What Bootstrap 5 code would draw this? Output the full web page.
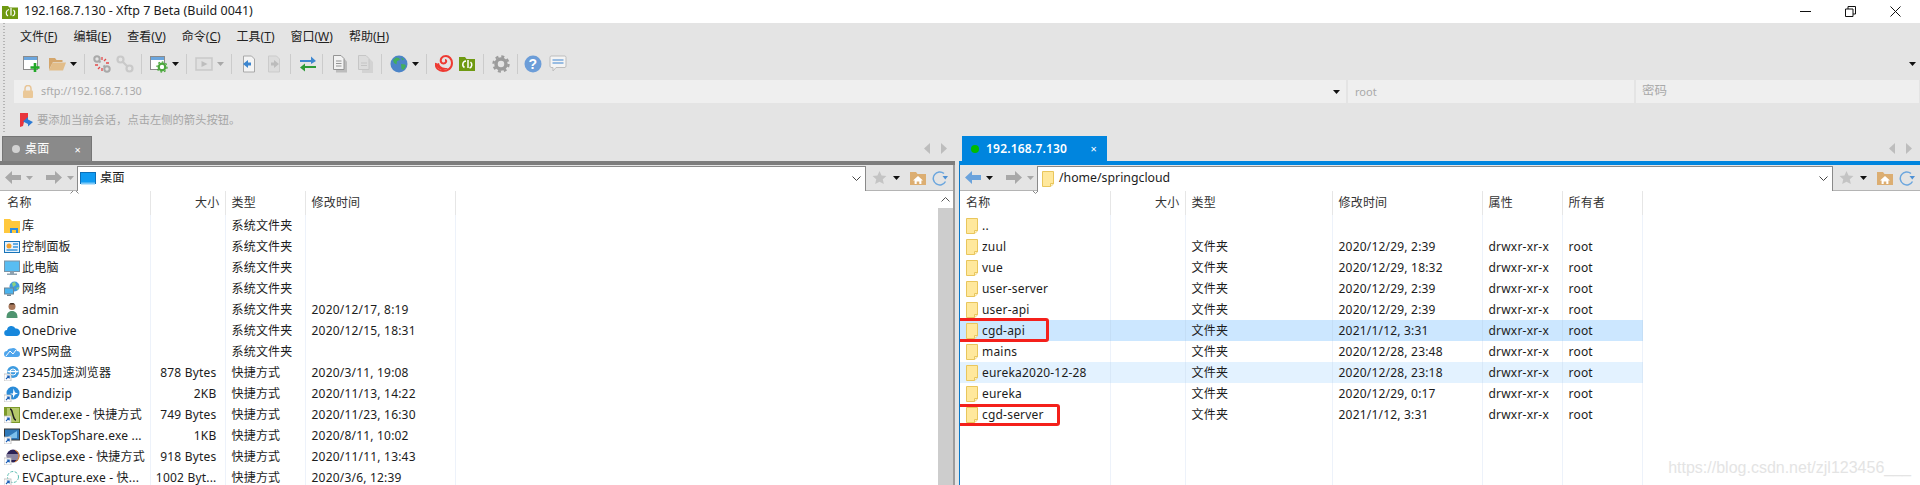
<!DOCTYPE html>
<html lang="zh-CN">
<head>
  <meta charset="UTF-8">
  <title>192.168.7.130 - Xftp 7 Beta (Build 0041)</title>
  <meta name="viewport" content="width=device-width, initial-scale=1.0">
  <link href="https://cdn.jsdelivr.net/npm/bootstrap@5.3.3/dist/css/bootstrap.min.css" rel="stylesheet">
  <style>
    html, body { height: 485px; overflow: hidden; }
    body { font-family: "Noto Sans", "Noto Sans CJK SC", sans-serif; font-size: 12px; line-height: 1; color: #1c1c1c; background: #fff; letter-spacing: .2px; }
    svg { display: block; flex: none; }
    .titlebar { height: 23px; padding-left: 2px; font-size: 12.5px; letter-spacing: 0; }
    .titlebar .app-title { margin-left: 6px; }
    .winbtns { gap: 34px; padding-right: 19px; }
    .chrome { background: #e4e4e4; height: 113px; }
    .grip { width: 14px; padding-left: 3px; }
    .grip i { display: block; height: 111px; width: 2px; background: repeating-linear-gradient(#b5b5b5 0 1px, transparent 1px 3px); }
    .menubar { height: 24px; padding: 8px 0 0 6px; gap: 16px; color: #222; letter-spacing: 0; }
    .tbar { height: 33px; padding-left: 9px; gap: 7px; }
    .tb-sep { width: 1px; height: 20px; background: #cbcbcb; margin-right: 1px; }
    .tb-caret { margin-left: -3px; }
    .tb-tight { margin-left: -2px; }
    .addr { height: 23px; gap: 2px; color: #a9a9a9; font-size: 10.8px; letter-spacing: 0; }
    .addr > div { background: #efefef; height: 23px; }
    .addr-main { width: 1332px; padding: 0 6px 0 9px; }
    .addr-user { width: 286px; padding-left: 7px; font-size: 11px; }
    .addr-pass { width: 283px; padding-left: 6px; font-size: 12.5px; }
    .hint { height: 33px; padding-left: 6px; color: #a6a6a6; font-size: 11.3px; letter-spacing: 0; }
    .panes { gap: 4px; height: 349px; background: #e4e4e4; }
    .pane-l { width: 955px; }
    .pane-r { width: 961px; }
    .tabstrip { height: 25px; background: #e4e4e4; }
    .ftab { height: 25px; color: #fff; font-weight: 600; }
    .ftab-l { width: 90px; margin-left: 2px; padding: 0 10px 0 9px; background: #8a8a8a; border: 1px solid #757575; border-bottom: 0; font-weight: 400; }
    .ftab-r { width: 145px; margin-left: 3px; padding: 0 10px 0 9px; background: #0085de; }
    .dot { width: 8px; height: 8px; border-radius: 50%; margin-right: 5px; }
    .dot-off { background: #d2d2d2; }
    .dot-on { background: #00bb00; margin-right: 7px; }
    .tab-x { margin-left: auto; font-size: 11px; font-weight: 400; }
    .scrolls { gap: 11px; padding-right: 8px; margin-left: auto; }
    .bar-l { height: 4px; background: #7d7d7d; }
    .bar-r { height: 4px; background: #0085de; }
    .body-r { border-left: 1px solid #0a78c8; height: 320px; background: #fff; }
    .body-l { height: 320px; background: #fff; border-right: 2px solid #9c9c9c; }
    .navrow { height: 26px; background: #e4e4e4; border-bottom: 1px solid #b4b4b4; padding-left: 5px; }
    .pathbox { height: 25px; background: #fff; border-top: 1px solid #8a8a8a; border-left: 1px solid #8a8a8a; border-right: 1px solid #8a8a8a; margin-top: 1px; padding: 0 4px 0 2px; font-size: 12.3px; letter-spacing: 0; }
    .path-folder { margin: 0 1px 0 2px; }
    .navbtns { width: 72px; gap: 5px; }
    .navtools { width: 87px; padding-left: 6px; gap: 6px; }
    .listwrap { height: 294px; overflow: hidden; position: relative; }
    .ftable { table-layout: fixed; border-collapse: collapse; }
    .ftable td, .ftable th { height: 21px; padding: 0 0 0 6px; border-right: 1px solid #edf2fa; white-space: nowrap; overflow: hidden; font-weight: 400; vertical-align: middle; }
    .ftable th { height: 24px; border-right-color: #e6e6e6; color: #333; }
    .ftable td.cell-name, .ftable th.cell-name { overflow: visible; position: relative; }
    .ftable .cell-size { padding: 0 8px 0 0; text-align: right; overflow: hidden; }
    .ftable th.cell-size { padding-right: 5px; }
    .ftable .row-sel td { background: #cce7ff; border-right-color: #c4def6; }
    .ftable .row-alt td { background: #e3f2ff; border-right-color: #d8e8f8; }
    .sel-l .cell-name { padding-left: 4px; }
    .name-in { gap: 2px; }
    .name-r { gap: 0; }
    .sort-mark { position: absolute; top: -2px; font-size: 0; }
    .sort-l { left: 70px; }
    .sort-r { left: 71px; }
    .redbox { position: absolute; border: 3px solid #f4201b; border-radius: 3px; }
    .redbox-api { left: -3px; top: -2px; width: 92px; height: 24px; }
    .redbox-srv { left: -3px; top: 0; width: 103px; height: 22px; }
    .sbar { width: 15px; background: #f1f1f1; }
    .sbar-up { height: 17px; background: #fff; }
    .sbar-thumb { background: #cdcdcd; }
    .wmark { position: absolute; right: 9px; bottom: 9px; font-family: "Liberation Sans", sans-serif; font-size: 16px; letter-spacing: 0; color: #e4e4e4; }
  </style>
</head>
<body>
  <svg width="0" height="0" class="position-absolute">
    <symbol id="caret" viewBox="0 0 7 4"><path d="M0 0h7L3.5 4z" fill="#111"/></symbol>
    <symbol id="caretg" viewBox="0 0 7 4"><path d="M0 0h7L3.5 4z" fill="#a8a8a8"/></symbol>
    <symbol id="folder" viewBox="0 0 16 16"><path d="M.5.5h11v12.5l-3 2.5H.5z" fill="#ffe89c" stroke="#e9c65c"/><path d="M8.5 15.5v-3h3" fill="#fff3c8" stroke="#e9c65c"/></symbol>
    <symbol id="sc" viewBox="0 0 16 16"><rect x="0" y="9" width="7" height="7" fill="#fff" stroke="#b8b8b8" stroke-width=".8"/><path d="M2 14l2.6-2.6M2.8 11h2.4v2.4" fill="none" stroke="#1c5fb5" stroke-width="1.1"/></symbol>
    <symbol id="arrowl" viewBox="0 0 16 13"><path d="M7 0v4h9v5H7v4L0 6.500z"/></symbol>
    <symbol id="arrowr" viewBox="0 0 16 13"><path d="M9 0v4H0v5h9v4l7-6.500z"/></symbol>
    <symbol id="star" viewBox="0 0 16 16"><path d="M8 1l2.200 4.800 5.200.6-3.900 3.500 1.100 5.100L8 12.400 3.400 15l1.100-5.100L.6 6.400l5.200-.6z" fill="#c4c4c4"/></symbol>
    <symbol id="home" viewBox="0 0 16 16"><path d="M0 2h6l1.500 2H16v11H0z" fill="#dcae72"/><path d="M8 6l5 4.500h-1.600V14H9.300v-2.500H6.700V14H4.600v-3.500H3z" fill="#fff"/></symbol>
    <symbol id="refresh" viewBox="0 0 16 16"><path d="M13.500 11.500A6.500 6.500 0 1 1 12 3.500" fill="none" stroke="#6ba6de" stroke-width="1.500"/><path d="M10.500 6h5.500l-2.700 3.500z" fill="#4d90d4"/></symbol>
    <symbol id="chev" viewBox="0 0 9 5"><path d="M.5.500l4 4 4-4" fill="none" stroke="#444"/></symbol>
  </svg>

  <div class="titlebar d-flex align-items-center">
    <svg width="16" height="14" viewBox="0 0 16 14"><path d="M0 1h6l1.500 1.500H16V14H0z" fill="#6f9a12"/><path d="M7 4.500A3.500 3.500 0 0 0 6 11M9 3v7.500M11.500 5a3.500 3.500 0 0 1-1 6" fill="none" stroke="#fff" stroke-width="1.200"/></svg>
    <span class="app-title">192.168.7.130 - Xftp 7 Beta (Build 0041)</span>
    <div class="winbtns d-flex align-items-center ms-auto">
      <svg width="11" height="11" viewBox="0 0 11 11"><path d="M0 5.500h11" stroke="#111"/></svg>
      <svg width="11" height="11" viewBox="0 0 11 11"><path d="M.5 3h7.500v7.500H.5zM3 3V.5h7.500V8H8" fill="none" stroke="#111"/></svg>
      <svg width="11" height="11" viewBox="0 0 11 11"><path d="M.5.500l10 10M10.500.5l-10 10" stroke="#111"/></svg>
    </div>
  </div>

  <div class="chrome d-flex">
    <div class="grip"><i></i></div>
    <div class="flex-grow-1">
      <div class="menubar d-flex">
        <span>文件(<u>F</u>)</span><span>编辑(<u>E</u>)</span><span>查看(<u>V</u>)</span><span>命令(<u>C</u>)</span><span>工具(<u>T</u>)</span><span>窗口(<u>W</u>)</span><span>帮助(<u>H</u>)</span>
      </div>
      <div class="tbar d-flex align-items-center position-relative">
        <svg width="18" height="18" viewBox="0 0 18 18"><rect x=".5" y="1.500" width="14" height="13" fill="#fff" stroke="#8b8b8b"/><rect x="1" y="2" width="13" height="3" fill="#6ba6de"/><path d="M12 8v9M7.500 12.500h9" stroke="#22a827" stroke-width="2.600"/></svg>
        <svg width="18" height="18" viewBox="0 0 18 18"><path d="M1 3h6l1.500 2h6v2H5l-4 8z" fill="#d4a66c"/><path d="M4.500 7.500H18l-3 8H1z" fill="#e2bd89"/></svg>
        <svg class="tb-caret" width="7" height="4"><use href="#caret"/></svg>
        <div class="tb-sep"></div>
        <svg width="18" height="18" viewBox="0 0 18 18"><g fill="none" stroke="#a9a9a9" stroke-width="2"><circle cx="4" cy="4" r="2.700"/><circle cx="14" cy="14" r="2.700"/><path d="M6 6l1.500 1.500M12 12l-1.500-1.500"/></g><path d="M9 2v3M13 4l-2 2M16 8h-3M2 10h3M5 14l2-2M9 16v-3" stroke="#e44b4b" stroke-width="1.300"/></svg>
        <svg class="tb-tight" width="18" height="18" viewBox="0 0 18 18"><g fill="none" stroke="#c9c9c9" stroke-width="2.200"><circle cx="4.500" cy="4.500" r="3"/><circle cx="13.500" cy="13.500" r="3"/><path d="M6.500 6.500l5 5"/></g></svg>
        <div class="tb-sep"></div>
        <svg width="18" height="18" viewBox="0 0 18 18"><rect x=".5" y="1.500" width="14" height="13" fill="#fff" stroke="#8b8b8b"/><rect x="1" y="2" width="13" height="3" fill="#6ba6de"/><circle cx="12" cy="12" r="3.300" fill="none" stroke="#4ba83c" stroke-width="2.200"/><circle cx="12" cy="12" r="5" fill="none" stroke="#4ba83c" stroke-width="1.300" stroke-dasharray="1.800 2"/></svg>
        <svg class="tb-caret" width="7" height="4"><use href="#caret"/></svg>
        <div class="tb-sep"></div>
        <svg width="18" height="18" viewBox="0 0 18 18"><rect x="1" y="3" width="16" height="12" fill="#e0e0e0" stroke="#c9c9c9" stroke-width="1.500"/><path d="M6.500 6l6 3-6 3z" fill="#bdbdbd"/></svg>
        <svg class="tb-caret" width="7" height="4"><use href="#caretg"/></svg>
        <div class="tb-sep"></div>
        <svg width="18" height="18" viewBox="0 0 18 18"><path d="M3.500 1h8l3 3v13h-11z" fill="#f4f4f4" stroke="#a8a8a8"/><path d="M3 9l5-4v2.500h3v3H8V13z" fill="#3d86cf"/></svg>
        <svg width="18" height="18" viewBox="0 0 18 18"><path d="M3.500 1h8l3 3v13h-11z" fill="#dcdcdc" stroke="#cbcbcb"/><path d="M14 9L9 5v2.500H6v3h3V13z" fill="#bcbcbc"/></svg>
        <div class="tb-sep"></div>
        <svg width="18" height="18" viewBox="0 0 18 18"><path d="M1 6h11V2.500L17 7l-5 3V8H1z" fill="#3e87d0" transform="translate(0 -1)"/><path d="M17 11H6V8.500L1 12.500 6 16.500V13h11z" fill="#2d9b36"/></svg>
        <div class="tb-sep tb-tight"></div>
        <svg width="18" height="18" viewBox="0 0 18 18"><path d="M5 3.500h8l3 3v11H5z" fill="#bcbcbc"/><path d="M2.500 .5h7.500l3 3V14.500H2.500z" fill="#f2f2f2" stroke="#949494"/><path d="M5 6h5.500M5 8.500h5.500M5 11h5.500" stroke="#949494"/></svg>
        <svg width="18" height="18" viewBox="0 0 18 18"><path d="M6 4h8l3 3v11H6z" fill="#d3d3d3"/><path d="M2.500 .5h7.500l3 3V14.500H2.500z" fill="#dcdcdc" stroke="#c6c6c6"/><path d="M5 8h6M5 10.500h6" stroke="#c4c4c4"/></svg>
        <div class="tb-sep"></div>
        <svg width="18" height="18" viewBox="0 0 18 18"><circle cx="9" cy="9" r="8.500" fill="#4c84c8"/><path d="M3 5l3-2.500 3 .5 1 2-3 1-.5 3.500L4 8zM11 9l4 .5 1 1.500-2.500 4-2-1zM11 2.500l3 1.500-1.500 1.500z" fill="#43ae5c"/></svg>
        <svg class="tb-caret" width="7" height="4"><use href="#caret"/></svg>
        <div class="tb-sep"></div>
        <svg width="18" height="18" viewBox="0 0 18 18"><path d="M1 8c-1 5 3 8 7 8 5 0 9-3 9-8 0-4-3-7-6-7-4 0-6 3-5 6 1 2 4 2 5 0 .5-1 0-2-1-2" fill="none" stroke="#ee3a32" stroke-width="2"/><path d="M1 9c1 4 4 6 7 6 2 0 4-1 5-2-3 0-8 0-9-5z" fill="#ee3a32"/></svg>
        <svg class="tb-tight" width="18" height="18" viewBox="0 0 18 18"><path d="M1 2h6l1.500 2H17v12H1z" fill="#6f9a12"/><path d="M8 6a3.500 3.500 0 0 0-1.500 6.500M10 5v8M12.500 7a3.500 3.500 0 0 1-1 6" fill="none" stroke="#fff" stroke-width="1.500"/></svg>
        <div class="tb-sep"></div>
        <svg width="18" height="18" viewBox="0 0 18 18"><circle cx="9" cy="9" r="5" fill="none" stroke="#9c9c9c" stroke-width="3.500"/><circle cx="9" cy="9" r="7.500" fill="none" stroke="#9c9c9c" stroke-width="2.400" stroke-dasharray="3 2.900"/></svg>
        <div class="tb-sep"></div>
        <svg class="tb-tight" width="18" height="18" viewBox="0 0 18 18"><circle cx="9" cy="9" r="8.500" fill="#6c9dd8"/><text x="9" y="14" text-anchor="middle" font-family="Liberation Sans" font-weight="700" font-size="14" fill="#fff">?</text></svg>
        <svg width="18" height="18" viewBox="0 0 18 18"><path d="M2 1h14a1.500 1.500 0 0 1 1 1.500V11a1.500 1.500 0 0 1-1 1.500H7L4 16v-3.500H2A1.500 1.500 0 0 1 1 11V2.500A1.500 1.500 0 0 1 2 1z" fill="#f4f4f4" stroke="#bdbdbd"/><path d="M3.500 5h11M3.500 8h11" stroke="#7aa9dc" stroke-width="1.600"/></svg>
        <svg class="position-absolute end-0 me-1" width="7" height="4"><use href="#caret"/></svg>
      </div>
      <div class="addr d-flex">
        <div class="addr-main d-flex align-items-center">
          <svg class="me-2" width="10" height="13" viewBox="0 0 10 13"><path d="M2 6V3.500a3 3 0 0 1 6 0V6" fill="none" stroke="#e8c597" stroke-width="1.500"/><rect y="5.500" width="10" height="7.500" rx="1" fill="#eac898"/></svg>
          <span>sftp://192.168.7.130</span>
          <svg class="ms-auto" width="7" height="4"><use href="#caret"/></svg>
        </div>
        <div class="addr-user d-flex align-items-center">root</div>
        <div class="addr-pass d-flex align-items-center">密码</div>
      </div>
      <div class="hint d-flex align-items-center">
        <svg class="me-1" width="13" height="14" viewBox="0 0 13 14"><path d="M0 0h8v8L4 9 3 13 0 14z" fill="#e8353d"/><path d="M3 8.500L8 4v2.500h0L13 9l-5 4.500V11z" fill="#2d7bd4"/></svg>
        <span>要添加当前会话，点击左侧的箭头按钮。</span>
      </div>
    </div>
  </div>

  <div class="panes d-flex">
    <div class="pane-l">
      <div class="tabstrip d-flex">
        <div class="ftab ftab-l d-flex align-items-center"><span class="dot dot-off"></span>桌面<span class="tab-x">×</span></div>
        <div class="scrolls d-flex align-items-center">
          <svg width="6" height="11" viewBox="0 0 6 11"><path d="M6 0v11L0 5.500z" fill="#bdbdbd"/></svg>
          <svg width="6" height="11" viewBox="0 0 6 11"><path d="M0 0v11l6-5.500z" fill="#bdbdbd"/></svg>
        </div>
      </div>
      <div class="bar-l"></div>
      <div class="body-l">
        <div class="navrow d-flex align-items-center">
          <div class="navbtns d-flex align-items-center">
            <svg width="16" height="13" fill="#a8a8a8"><use href="#arrowl"/></svg>
            <svg width="7" height="4"><use href="#caretg"/></svg>
            <svg class="ms-2" width="16" height="13" fill="#a8a8a8"><use href="#arrowr"/></svg>
            <svg width="7" height="4"><use href="#caretg"/></svg>
          </div>
          <div class="pathbox flex-grow-1 d-flex align-items-center">
            <svg class="me-1" width="16" height="13" viewBox="0 0 16 13"><rect x=".5" y=".5" width="15" height="11" fill="#0f9bf2" stroke="#0b6fb8"/><path d="M1 11.500h14" stroke="#7cc8f7" stroke-width="2"/></svg>
            <span>桌面</span>
            <svg class="ms-auto" width="9" height="5"><use href="#chev"/></svg>
          </div>
          <div class="navtools d-flex align-items-center">
            <svg width="15" height="15"><use href="#star"/></svg>
            <svg width="7" height="4"><use href="#caret"/></svg>
            <svg class="ms-1" width="16" height="16"><use href="#home"/></svg>
            <svg width="16" height="16"><use href="#refresh"/></svg>
          </div>
        </div>
        <div class="d-flex">
          <div class="listwrap flex-grow-1">
            <table class="ftable sel-l">
              <colgroup><col width="150"><col width="75"><col width="80"><col width="150"></colgroup>
              <tr><th class="cell-name"><svg class="sort-mark sort-l" width="9" height="5"><path d="M.5 4.500l4-4 4 4" fill="none" stroke="#888"/></svg>&nbsp;名称</th><th class="cell-size">大小</th><th>类型</th><th>修改时间</th></tr>
              <tr><td class="cell-name"><div class="name-in d-flex align-items-center">
                <svg width="16" height="16" viewBox="0 0 16 16"><path d="M0 1h6l2 2h8v12H0z" fill="#ffc83d"/><path d="M6 15v-5h8v5h-2v-3H8v3z" fill="#2f8de0"/></svg>库</div></td><td class="cell-size"></td><td>系统文件夹</td><td></td></tr>
              <tr><td class="cell-name"><div class="name-in d-flex align-items-center">
                <svg width="16" height="16" viewBox="0 0 16 16"><rect x=".5" y="2.500" width="15" height="11" fill="#e6f2fc" stroke="#1873b8"/><circle cx="5" cy="7" r="2.500" fill="#f0a030"/><path d="M9 5h5M9 8h5M2.500 11h11" stroke="#3a96dc" stroke-width="1.500"/></svg>控制面板</div></td><td class="cell-size"></td><td>系统文件夹</td><td></td></tr>
              <tr><td class="cell-name"><div class="name-in d-flex align-items-center">
                <svg width="16" height="16" viewBox="0 0 16 16"><rect x=".5" y="1" width="15" height="10.500" fill="#58bdf2" stroke="#7a93a6"/><path d="M6 11.500h4v2H6zM3 13.500h10V15H3z" fill="#8fa2b0"/></svg>此电脑</div></td><td class="cell-size"></td><td>系统文件夹</td><td></td></tr>
              <tr><td class="cell-name"><div class="name-in d-flex align-items-center">
                <svg width="16" height="16" viewBox="0 0 16 16"><circle cx="10.500" cy="5.500" r="5" fill="#3f9bdc"/><path d="M8 2l3-1 1 3-3 2zM12 7l3-1-1 3z" fill="#8dd17f"/><rect x=".5" y="7" width="9" height="6" fill="#4ab3ee" stroke="#6f8696"/><path d="M3 13.500h4V15H3z" fill="#6f8696"/></svg>网络</div></td><td class="cell-size"></td><td>系统文件夹</td><td></td></tr>
              <tr><td class="cell-name"><div class="name-in d-flex align-items-center">
                <svg width="16" height="16" viewBox="0 0 16 16"><circle cx="8" cy="4.500" r="3.500" fill="#a8785a"/><path d="M5 2.500a3.500 3 0 0 1 6 0z" fill="#3c2b20"/><path d="M2.500 16c0-5 2-7 5.500-7s5.500 2 5.500 7z" fill="#4f9470"/></svg>admin</div></td><td class="cell-size"></td><td>系统文件夹</td><td>2020/12/17, 8:19</td></tr>
              <tr><td class="cell-name"><div class="name-in d-flex align-items-center">
                <svg width="16" height="16" viewBox="0 0 16 16"><path d="M3.500 13a3 3 0 0 1-.5-6 4.500 4.500 0 0 1 8.500-1.500A3.800 3.800 0 0 1 16 9.500c0 2-1.500 3.500-3.500 3.500z" fill="#1787dc"/></svg>OneDrive</div></td><td class="cell-size"></td><td>系统文件夹</td><td>2020/12/15, 18:31</td></tr>
              <tr><td class="cell-name"><div class="name-in d-flex align-items-center">
                <svg width="16" height="16" viewBox="0 0 16 16"><path d="M3 13a3 3 0 0 1 0-6 3.500 3.500 0 0 1 4-2.500 4 4 0 0 1 6 2.500 3 3 0 0 1 0 6z" fill="#4fa5ec"/><path d="M2 12l4-5 3 3 3-4" fill="none" stroke="#fff"/></svg>WPS网盘</div></td><td class="cell-size"></td><td>系统文件夹</td><td></td></tr>
              <tr><td class="cell-name"><div class="name-in d-flex align-items-center">
                <svg width="16" height="16" viewBox="0 0 16 16"><circle cx="9" cy="7" r="6" fill="#3d9be0"/><path d="M3.500 6.500h11" stroke="#fff" stroke-width="1.500"/><circle cx="9" cy="7" r="3" fill="none" stroke="#fff"/><use href="#sc"/></svg>2345加速浏览器</div></td><td class="cell-size">878 Bytes</td><td>快捷方式</td><td>2020/3/11, 19:08</td></tr>
              <tr><td class="cell-name"><div class="name-in d-flex align-items-center">
                <svg width="16" height="16" viewBox="0 0 16 16"><circle cx="9" cy="7" r="6.500" fill="#2a8bd8"/><path d="M9.500 2.500l1.500 4 3 1-3 1-2 3.500V9L6 7.500h3z" fill="#fff"/><use href="#sc"/></svg>Bandizip</div></td><td class="cell-size">2KB</td><td>快捷方式</td><td>2020/11/13, 14:22</td></tr>
              <tr><td class="cell-name"><div class="name-in d-flex align-items-center">
                <svg width="16" height="16" viewBox="0 0 16 16"><rect y="0" width="16" height="16" fill="#7d9a2a"/><rect x="3" y="1" width="12" height="14" fill="#b5c96a"/><path d="M6 2c2 0 2 3 3 6s1 5 3 5" fill="none" stroke="#222" stroke-width="1.500"/><use href="#sc"/></svg>Cmder.exe - 快捷方式</div></td><td class="cell-size">749 Bytes</td><td>快捷方式</td><td>2020/11/23, 16:30</td></tr>
              <tr><td class="cell-name"><div class="name-in d-flex align-items-center">
                <svg width="16" height="16" viewBox="0 0 16 16"><rect x=".5" y="1" width="15" height="11" fill="#2f78b8" stroke="#333"/><path d="M2 10l11-7v7z" fill="#7cc0ec"/><use href="#sc"/></svg>DeskTopShare.exe ...</div></td><td class="cell-size">1KB</td><td>快捷方式</td><td>2020/8/11, 10:02</td></tr>
              <tr><td class="cell-name"><div class="name-in d-flex align-items-center">
                <svg width="16" height="16" viewBox="0 0 16 16"><circle cx="9" cy="7" r="6.500" fill="#2c2255"/><path d="M3 6h12M2.500 8h13M3.500 10h11" stroke="#fff" stroke-width=".9"/><path d="M11 1a6.500 6.500 0 0 1 0 12" fill="none" stroke="#e8872b"/><use href="#sc"/></svg>eclipse.exe - 快捷方式</div></td><td class="cell-size">918 Bytes</td><td>快捷方式</td><td>2020/11/11, 13:43</td></tr>
              <tr><td class="cell-name"><div class="name-in d-flex align-items-center">
                <svg width="16" height="16" viewBox="0 0 16 16"><circle cx="9" cy="7" r="5.500" fill="none" stroke="#5dbdb2" stroke-dasharray="3 1.500"/><use href="#sc"/></svg>EVCapture.exe - 快...</div></td><td class="cell-size">1002 Byt...</td><td>快捷方式</td><td>2020/3/6, 12:39</td></tr>
            </table>
          </div>
          <div class="sbar d-flex flex-column">
            <div class="sbar-up d-flex align-items-center justify-content-center"><svg width="9" height="5" viewBox="0 0 9 5"><path d="M.5 4.500l4-4 4 4" fill="none" stroke="#555"/></svg></div>
            <div class="sbar-thumb flex-grow-1"></div>
          </div>
        </div>
      </div>
    </div>

    <div class="pane-r position-relative">
      <div class="tabstrip d-flex">
        <div class="ftab ftab-r d-flex align-items-center"><span class="dot dot-on"></span>192.168.7.130<span class="tab-x">×</span></div>
        <div class="scrolls d-flex align-items-center">
          <svg width="6" height="11" viewBox="0 0 6 11"><path d="M6 0v11L0 5.500z" fill="#bdbdbd"/></svg>
          <svg width="6" height="11" viewBox="0 0 6 11"><path d="M0 0v11l6-5.500z" fill="#bdbdbd"/></svg>
        </div>
      </div>
      <div class="bar-r"></div>
      <div class="body-r">
        <div class="navrow d-flex align-items-center">
          <div class="navbtns d-flex align-items-center">
            <svg width="16" height="13" fill="#6ba3dc"><use href="#arrowl"/></svg>
            <svg width="7" height="4"><use href="#caret"/></svg>
            <svg class="ms-2" width="16" height="13" fill="#a8a8a8"><use href="#arrowr"/></svg>
            <svg width="7" height="4"><use href="#caretg"/></svg>
          </div>
          <div class="pathbox flex-grow-1 d-flex align-items-center">
            <svg class="path-folder" width="16" height="16"><use href="#folder"/></svg>
            <span>/home/springcloud</span>
            <svg class="ms-auto" width="9" height="5"><use href="#chev"/></svg>
          </div>
          <div class="navtools d-flex align-items-center">
            <svg width="15" height="15"><use href="#star"/></svg>
            <svg width="7" height="4"><use href="#caret"/></svg>
            <svg class="ms-1" width="16" height="16"><use href="#home"/></svg>
            <svg width="16" height="16"><use href="#refresh"/></svg>
          </div>
        </div>
        <div class="listwrap">
          <table class="ftable">
            <colgroup><col width="150"><col width="75"><col width="147"><col width="150"><col width="80"><col width="80"></colgroup>
            <tr><th class="cell-name"><svg class="sort-mark sort-r" width="9" height="5"><path d="M.5.500l4 4 4-4" fill="none" stroke="#888"/></svg>名称</th><th class="cell-size">大小</th><th>类型</th><th>修改时间</th><th>属性</th><th>所有者</th></tr>
            <tr><td class="cell-name"><div class="name-r d-flex align-items-center"><svg width="16" height="16"><use href="#folder"/></svg>..</div></td><td class="cell-size"></td><td></td><td></td><td></td><td></td></tr>
            <tr><td class="cell-name"><div class="name-r d-flex align-items-center"><svg width="16" height="16"><use href="#folder"/></svg>zuul</div></td><td class="cell-size"></td><td>文件夹</td><td>2020/12/29, 2:39</td><td>drwxr-xr-x</td><td>root</td></tr>
            <tr><td class="cell-name"><div class="name-r d-flex align-items-center"><svg width="16" height="16"><use href="#folder"/></svg>vue</div></td><td class="cell-size"></td><td>文件夹</td><td>2020/12/29, 18:32</td><td>drwxr-xr-x</td><td>root</td></tr>
            <tr><td class="cell-name"><div class="name-r d-flex align-items-center"><svg width="16" height="16"><use href="#folder"/></svg>user-server</div></td><td class="cell-size"></td><td>文件夹</td><td>2020/12/29, 2:39</td><td>drwxr-xr-x</td><td>root</td></tr>
            <tr><td class="cell-name"><div class="name-r d-flex align-items-center"><svg width="16" height="16"><use href="#folder"/></svg>user-api</div></td><td class="cell-size"></td><td>文件夹</td><td>2020/12/29, 2:39</td><td>drwxr-xr-x</td><td>root</td></tr>
            <tr class="row-sel"><td class="cell-name"><span class="redbox redbox-api"></span><div class="name-r d-flex align-items-center"><svg width="16" height="16"><use href="#folder"/></svg>cgd-api</div></td><td class="cell-size"></td><td>文件夹</td><td>2021/1/12, 3:31</td><td>drwxr-xr-x</td><td>root</td></tr>
            <tr><td class="cell-name"><div class="name-r d-flex align-items-center"><svg width="16" height="16"><use href="#folder"/></svg>mains</div></td><td class="cell-size"></td><td>文件夹</td><td>2020/12/28, 23:48</td><td>drwxr-xr-x</td><td>root</td></tr>
            <tr class="row-alt"><td class="cell-name"><div class="name-r d-flex align-items-center"><svg width="16" height="16"><use href="#folder"/></svg>eureka2020-12-28</div></td><td class="cell-size"></td><td>文件夹</td><td>2020/12/28, 23:18</td><td>drwxr-xr-x</td><td>root</td></tr>
            <tr><td class="cell-name"><div class="name-r d-flex align-items-center"><svg width="16" height="16"><use href="#folder"/></svg>eureka</div></td><td class="cell-size"></td><td>文件夹</td><td>2020/12/29, 0:17</td><td>drwxr-xr-x</td><td>root</td></tr>
            <tr><td class="cell-name"><span class="redbox redbox-srv"></span><div class="name-r d-flex align-items-center"><svg width="16" height="16"><use href="#folder"/></svg>cgd-server</div></td><td class="cell-size"></td><td>文件夹</td><td>2021/1/12, 3:31</td><td>drwxr-xr-x</td><td>root</td></tr>
            <tr><td class="cell-name"></td><td class="cell-size"></td><td></td><td></td><td></td><td></td></tr>
            <tr><td class="cell-name"></td><td class="cell-size"></td><td></td><td></td><td></td><td></td></tr>
            <tr><td class="cell-name"></td><td class="cell-size"></td><td></td><td></td><td></td><td></td></tr>
            <tr><td class="cell-name"></td><td class="cell-size"></td><td></td><td></td><td></td><td></td></tr>
          </table>
          <div class="wmark">https://blog.csdn.net/zjl123456___</div>
        </div>
      </div>
    </div>
  </div>

  <script src="https://cdn.jsdelivr.net/npm/bootstrap@5.3.3/dist/js/bootstrap.bundle.min.js"></script>
</body>
</html>
